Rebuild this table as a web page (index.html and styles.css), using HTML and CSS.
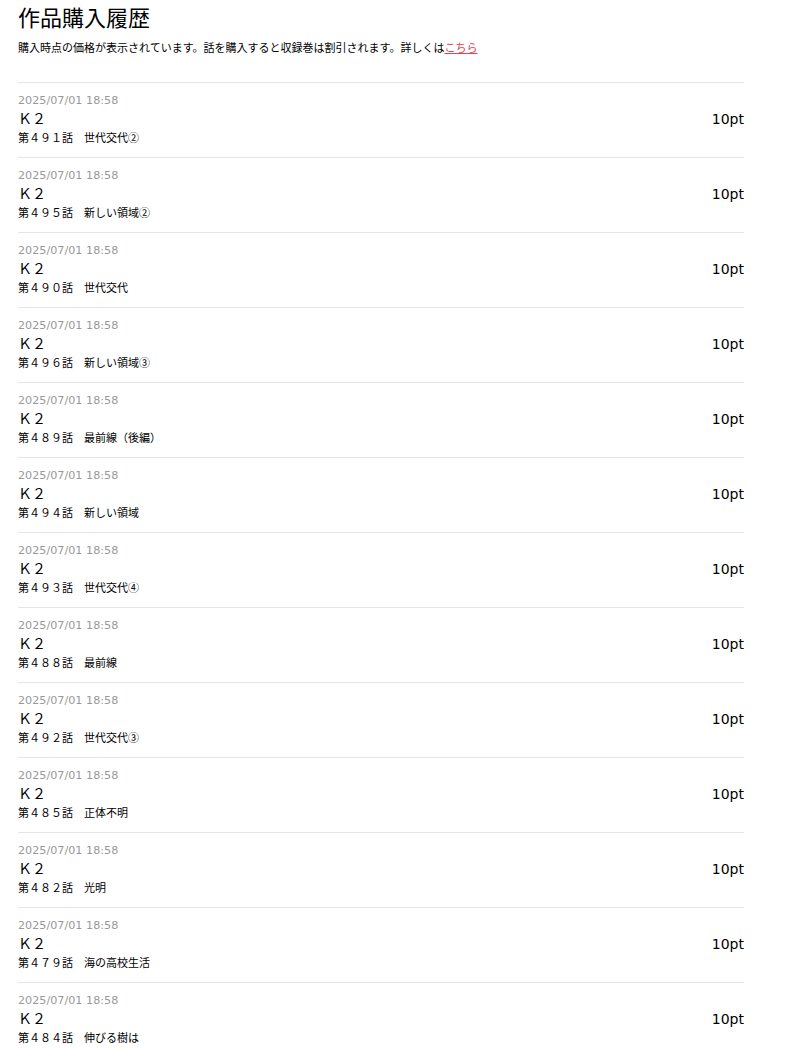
FILE: index.html
```html
<!DOCTYPE html>
<html lang="ja">
<head>
<meta charset="utf-8">
<title>作品購入履歴</title>
<link rel="stylesheet" href="styles.css">
</head>
<body>
<div class="page">
  <h1 class="title">作品購入履歴</h1>
  <p class="note">購入時点の価格が表示されています。話を購入すると収録巻は割引されます。詳しくは<a href="#" class="link">こちら</a></p>
  <ul class="list">
    <li class="row"><div class="info"><div class="date">2025/07/01 18:58</div><div class="name">Ｋ２</div><div class="ep">第４９１話　世代交代②</div></div><div class="price">10pt</div></li>
    <li class="row"><div class="info"><div class="date">2025/07/01 18:58</div><div class="name">Ｋ２</div><div class="ep">第４９５話　新しい領域②</div></div><div class="price">10pt</div></li>
    <li class="row"><div class="info"><div class="date">2025/07/01 18:58</div><div class="name">Ｋ２</div><div class="ep">第４９０話　世代交代</div></div><div class="price">10pt</div></li>
    <li class="row"><div class="info"><div class="date">2025/07/01 18:58</div><div class="name">Ｋ２</div><div class="ep">第４９６話　新しい領域③</div></div><div class="price">10pt</div></li>
    <li class="row"><div class="info"><div class="date">2025/07/01 18:58</div><div class="name">Ｋ２</div><div class="ep">第４８９話　最前線（後編）</div></div><div class="price">10pt</div></li>
    <li class="row"><div class="info"><div class="date">2025/07/01 18:58</div><div class="name">Ｋ２</div><div class="ep">第４９４話　新しい領域</div></div><div class="price">10pt</div></li>
    <li class="row"><div class="info"><div class="date">2025/07/01 18:58</div><div class="name">Ｋ２</div><div class="ep">第４９３話　世代交代④</div></div><div class="price">10pt</div></li>
    <li class="row"><div class="info"><div class="date">2025/07/01 18:58</div><div class="name">Ｋ２</div><div class="ep">第４８８話　最前線</div></div><div class="price">10pt</div></li>
    <li class="row"><div class="info"><div class="date">2025/07/01 18:58</div><div class="name">Ｋ２</div><div class="ep">第４９２話　世代交代③</div></div><div class="price">10pt</div></li>
    <li class="row"><div class="info"><div class="date">2025/07/01 18:58</div><div class="name">Ｋ２</div><div class="ep">第４８５話　正体不明</div></div><div class="price">10pt</div></li>
    <li class="row"><div class="info"><div class="date">2025/07/01 18:58</div><div class="name">Ｋ２</div><div class="ep">第４８２話　光明</div></div><div class="price">10pt</div></li>
    <li class="row"><div class="info"><div class="date">2025/07/01 18:58</div><div class="name">Ｋ２</div><div class="ep">第４７９話　海の高校生活</div></div><div class="price">10pt</div></li>
    <li class="row"><div class="info"><div class="date">2025/07/01 18:58</div><div class="name">Ｋ２</div><div class="ep">第４８４話　伸びる樹は</div></div><div class="price">10pt</div></li>
  </ul>
</div>
</body>
</html>
```

FILE: styles.css
```css
html, body {
  margin: 0;
  padding: 0;
  background: #fff;
}
body {
  font-family: "DejaVu Sans", "Noto Sans CJK JP", sans-serif;
  color: #000;
}
.page {
  width: 726px;
  padding: 0 18px;
}
.title {
  margin: 0;
  font-size: 22px;
  line-height: 32px;
  font-weight: normal;
  font-family: "Noto Sans CJK JP", sans-serif;
}
.note {
  margin: 9px 0 25px;
  font-size: 11px;
  line-height: 16px;
}
.link {
  color: #dd4450;
  text-decoration: underline;
}
.list {
  list-style: none;
  margin: 0;
  padding: 0;
}
.row {
  display: flex;
  justify-content: space-between;
  align-items: flex-start;
  border-top: 1px solid #e5e5e5;
  padding: 10px 0 12px;
}
.date {
  font-size: 11.2px;
  line-height: 16px;
  color: #999;
}
.name {
  font-size: 14px;
  line-height: 20px;
}
.ep {
  font-family: "Noto Sans CJK JP", sans-serif;
  font-size: 11px;
  line-height: 16px;
}
.price {
  font-size: 14px;
  line-height: 20px;
  margin-top: 16px;
}
```
